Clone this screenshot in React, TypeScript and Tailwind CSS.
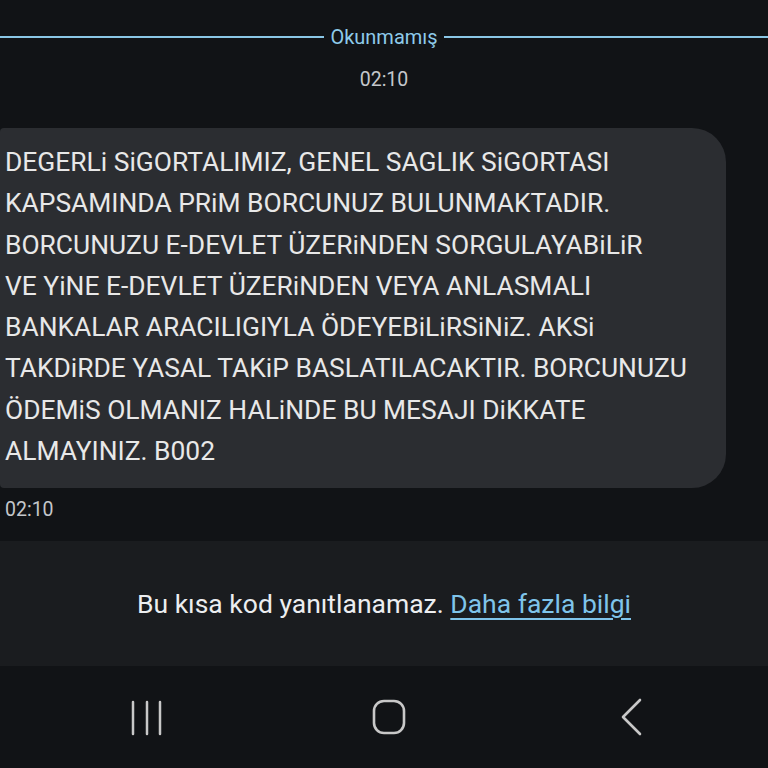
import React from "react";

const lines = [
  "DEGERLi SiGORTALIMIZ, GENEL SAGLIK SiGORTASI",
  "KAPSAMINDA PRiM BORCUNUZ BULUNMAKTADIR.",
  "BORCUNUZU E-DEVLET ÜZERiNDEN SORGULAYABiLiR",
  "VE YiNE E-DEVLET ÜZERiNDEN VEYA ANLASMALI",
  "BANKALAR ARACILIGIYLA ÖDEYEBiLiRSiNiZ. AKSi",
  "TAKDiRDE YASAL TAKiP BASLATILACAKTIR. BORCUNUZU",
  "ÖDEMiS OLMANIZ HALiNDE BU MESAJI DiKKATE",
  "ALMAYINIZ. B002",
];

export default function App() {
  return (
    <div
      className="h-[768px] w-[768px] overflow-hidden bg-[#111316] flex flex-col"
      style={{ fontFamily: "Roboto, 'Noto Sans', sans-serif" }}
    >
      <div className="flex-1 flex flex-col pt-[26px]">
        <div className="flex items-center h-[22px] gap-[6px]">
          <div className="flex-1 h-[2px] bg-[#8ac6e6]" />
          <span className="text-[20px] leading-[22px] text-[#8ecbea]">Okunmamış</span>
          <div className="flex-1 h-[2px] bg-[#8ac6e6]" />
        </div>
        <div className="mt-[21px] text-center text-[19.5px] leading-[22px] text-[#c4c7cb]">02:10</div>
        <div className="mt-[37px] w-[726px] bg-[#2b2d31] rounded-r-[34px] rounded-l-[4px] pl-[5px] pt-[14px] pb-[16px]">
          {lines.map((l, i) => (
            <div key={i} className="text-[26.4px] leading-[41.3px] text-[#e8e8e8] whitespace-nowrap">
              {l}
            </div>
          ))}
        </div>
        <div className="mt-[11px] pl-[5px] text-[19.5px] leading-[22px] text-[#c4c7cb]">02:10</div>
      </div>
      <div className="h-[125px] bg-[#1a1c1f] flex items-center justify-center text-[26.5px] text-[#eceef0]">
        <span>Bu kısa kod yanıtlanamaz.&nbsp;</span>
        <span className="text-[#7fc4ea] underline underline-offset-[5px] decoration-[2px]">Daha fazla bilgi</span>
      </div>
      <div className="h-[102px] flex items-center justify-between px-[120px]">
        <svg width="50" height="40" viewBox="0 0 50 40">
          <g stroke="#c8c8c8" strokeWidth="2.5" strokeLinecap="round">
            <line x1="13" y1="5" x2="13" y2="37" />
            <line x1="27" y1="5" x2="27" y2="37" />
            <line x1="40" y1="5" x2="40" y2="37" />
          </g>
        </svg>
        <svg width="40" height="40" viewBox="0 0 40 40">
          <rect x="5" y="4" width="30" height="32" rx="10" fill="none" stroke="#c8c8c8" strokeWidth="2.6" />
        </svg>
        <svg width="40" height="40" viewBox="0 0 40 40">
          <polyline points="32,3 15,20 32,37" fill="none" stroke="#c8c8c8" strokeWidth="2.6" strokeLinecap="round" strokeLinejoin="round" />
        </svg>
      </div>
    </div>
  );
}
